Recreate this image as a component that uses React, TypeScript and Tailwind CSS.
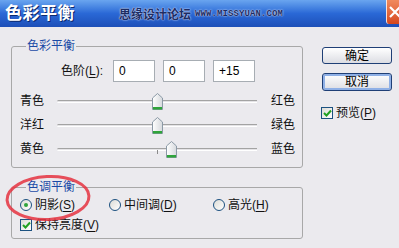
import React from 'react'

const FONT = "font-['Liberation_Sans','Noto_Sans_CJK_SC',sans-serif]"

// ---- small win-xp style controls ----

const Thumb = () => (
  <svg width="11" height="17" viewBox="0 0 11 17">
    <defs>
      <linearGradient id="thumbFill" x1="0" y1="0" x2="1" y2="0">
        <stop offset="0" stopColor="#ffffff" />
        <stop offset="1" stopColor="#d6d9dd" />
      </linearGradient>
    </defs>
    <path d="M5.5 0.5 L10.5 5 L10.5 16.5 L0.5 16.5 L0.5 5 Z" fill="url(#thumbFill)" stroke="#8b99a6" />
    <rect x="1" y="14" width="9" height="2.5" fill="#2fa43a" />
  </svg>
)

const Slider = ({ value }: { value: number }) => {
  const width = 200
  const left = ((value + 100) / 200) * (width - 1) - 5
  return (
    <div className="relative w-[200px] h-[17px] flex items-center">
      <div className="w-full h-[3px] border-t border-[#a3a3a3] border-b border-b-white bg-[#e4e3e6] rounded-l-full" />
      {value !== 0 && <div className="absolute left-[100px] top-[9px] w-px h-[4px] bg-[#8a8a8a]" />}
      <div className="absolute top-0" style={{ left }}>
        <Thumb />
      </div>
    </div>
  )
}

const Radio = ({ checked }: { checked?: boolean }) => (
  <span className="w-[12px] h-[12px] rounded-full border border-[#1c5180] bg-gradient-to-br from-[#dcdcd6] to-white flex items-center justify-center shrink-0">
    {checked && <span className="w-[4px] h-[4px] rounded-full bg-[#2fa43a]" />}
  </span>
)

const Check = () => (
  <span className="w-[12px] h-[12px] border border-[#1c5180] bg-gradient-to-br from-[#dcdcd6] to-white flex items-center justify-center shrink-0">
    <svg width="9" height="8" viewBox="0 0 9 8">
      <path d="M1 4 L3.5 6.5 L8 1.5" fill="none" stroke="#21a121" strokeWidth="2" />
    </svg>
  </span>
)

const NumBox = ({ v }: { v: string }) => (
  <div className="w-[42px] h-[22px] border border-[#a7adb3] bg-white flex items-center pl-[5px] text-[12px] text-black">
    {v}
  </div>
)

const Btn = ({ label, isDefault }: { label: string; isDefault?: boolean }) => (
  <div
    className={`w-[70px] rounded-[3px] border border-[#1f3f76] bg-gradient-to-b from-white to-[#dcdde3] flex items-center justify-center text-[12px] text-black ${
      isDefault ? 'h-[18px] shadow-[inset_0_0_0_2px_#8fb0e6]' : 'h-[17px]'
    }`}
  >
    {label}
  </div>
)

const Under = ({ c }: { c: string }) => <span className="underline underline-offset-2">{c}</span>

const sliders = [
  { left: '青色', right: '红色', value: 0 },
  { left: '洋红', right: '绿色', value: 0 },
  { left: '黄色', right: '蓝色', value: 15 },
]

export default function App() {
  return (
    <div className={`relative w-[399px] h-[248px] overflow-hidden bg-[#ebeaee] text-[#111] ${FONT}`}>
      {/* title bar */}
      <div className="h-[27px] flex items-center bg-gradient-to-b from-[#6aa5ef] via-[#2a68d6] to-[#1d4fb8]">
        <span className="ml-[5px] text-[17px] font-bold text-white tracking-[0.5px] [text-shadow:1px_1px_0_#0c2a6e]">
          色彩平衡
        </span>
        <span className="ml-[44px] mt-[2px] text-[12px] font-bold text-[#1c2c64] [text-shadow:0_0_2px_#c8d8f4,0_0_1px_#e8eefa]">
          思缘设计论坛
        </span>
        <span className="ml-[4px] mt-[3px] font-['Liberation_Mono',monospace] text-[9px] font-bold tracking-[0.1px] text-[#1c2c64] [text-shadow:0_0_2px_#c8d8f4,0_0_1px_#e8eefa]">
          WWW.MISSYUAN.COM
        </span>
        <div className="ml-auto self-start w-[13px] h-[24px] rounded-bl-[3px] bg-gradient-to-b from-[#f08a5e] to-[#d6461c] border-l border-white/80 overflow-hidden">
          <svg width="13" height="24" viewBox="0 0 13 24">
            <path d="M3 7 L13 17 M13 7 L3 17" stroke="#ffffff" strokeWidth="2.2" />
          </svg>
        </div>
      </div>

      <div className="flex">
        {/* left column */}
        <div className="pl-[11px] pt-[19px]">
          <div className="relative w-[292px] border border-[#a8a8a8] rounded-[3px] pb-[6px]">
            <span className="absolute -top-[9px] left-[14px] px-[1px] bg-[#ebeaee] text-[12px] leading-[16px] text-[#1b4aa6]">
              色彩平衡
            </span>
            <div className="mt-[13px] flex items-center">
              <span className="w-[91px] text-right text-[12px]">
                色阶(<Under c="L" />):
              </span>
              <div className="ml-[10px] flex gap-[8px]">
                <NumBox v="0" />
                <NumBox v="0" />
                <NumBox v="+15" />
              </div>
            </div>
            <div className="mt-[7px] flex flex-col">
              {sliders.map(s => (
                <div key={s.left} className="h-[24px] flex items-center pl-[8px]">
                  <span className="w-[37px] text-[12px]">{s.left}</span>
                  <Slider value={s.value} />
                  <span className="ml-[14px] text-[12px]">{s.right}</span>
                </div>
              ))}
            </div>
          </div>

          <div className="relative mt-[19px] w-[292px] border border-[#a8a8a8] rounded-[3px] pb-[5px]">
            <span className="absolute -top-[9px] left-[14px] px-[1px] bg-[#ebeaee] text-[12px] leading-[16px] text-[#1b4aa6]">
              色调平衡
            </span>
            <div className="mt-[9px] h-[16px] flex items-center pl-[8px] text-[12px]">
              <div className="w-[89px] flex items-center gap-[3px]">
                <Radio checked />
                <span>
                  阴影(<Under c="S" />)
                </span>
              </div>
              <div className="w-[104px] flex items-center gap-[3px]">
                <Radio />
                <span>
                  中间调(<Under c="D" />)
                </span>
              </div>
              <div className="flex items-center gap-[3px]">
                <Radio />
                <span>
                  高光(<Under c="H" />)
                </span>
              </div>
            </div>
            <div className="mt-[4px] h-[16px] flex items-center gap-[3px] pl-[8px] text-[12px]">
              <Check />
              <span>
                保持亮度(<Under c="V" />)
              </span>
            </div>
          </div>
        </div>

        {/* right column */}
        <div className="ml-[19px] pt-[20px] flex flex-col">
          <Btn label="确定" />
          <div className="mt-[9px]">
            <Btn label="取消" isDefault />
          </div>
          <div className="mt-[14px] -ml-[1px] h-[16px] flex items-center gap-[3px] text-[12px]">
            <Check />
            <span>
              预览(<Under c="P" />)
            </span>
          </div>
        </div>
      </div>

      {/* red hand-drawn highlight */}
      <svg className="absolute left-[3px] top-[172px] pointer-events-none" width="90" height="52" viewBox="0 0 90 52">
        <ellipse
          cx="45"
          cy="26"
          rx="41"
          ry="21.5"
          fill="none"
          stroke="#e5323f"
          strokeWidth="3"
          strokeOpacity="0.85"
          transform="rotate(-3 45 26)"
        />
      </svg>
    </div>
  )
}
